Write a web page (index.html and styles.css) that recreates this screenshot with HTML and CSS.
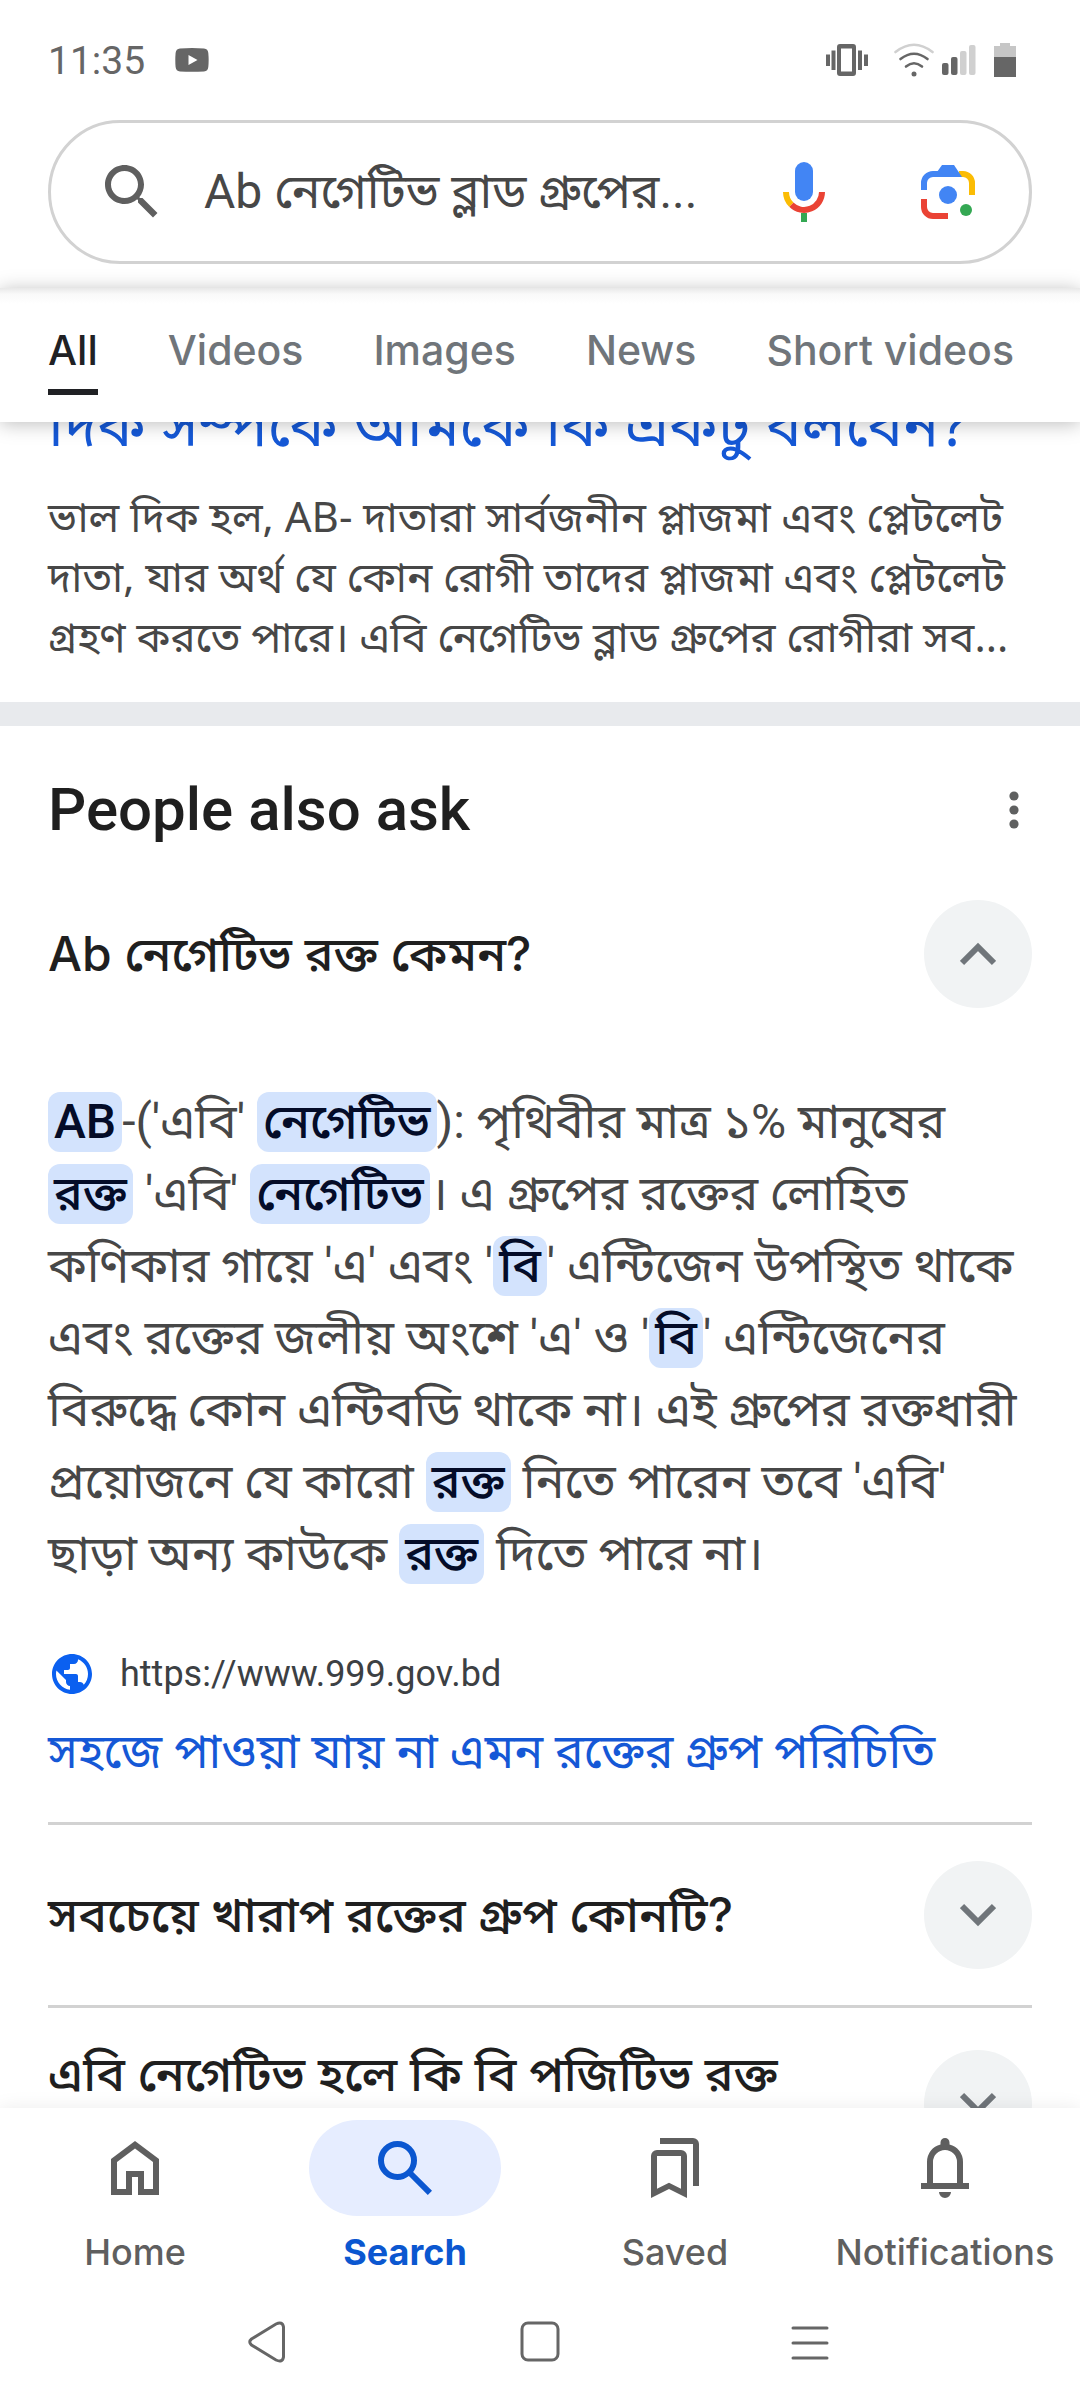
FILE: index.html
```html
<!DOCTYPE html>
<html lang="bn">
<head>
<meta charset="utf-8">
<meta name="viewport" content="width=device-width, initial-scale=1">
<title>Search</title>
<link rel="stylesheet" href="styles.css">
</head>
<body>
<div class="app">
  <header class="header">
    <div class="status">
      <span class="clock">11:35</span>
      <svg class="status-app" width="34" height="24" viewBox="0 0 34 24" aria-hidden="true"><path fill="#666" fill-rule="evenodd" d="M5 0.6Q17-.4 29 .6Q33 1 33.300 5Q34 12 33.300 19Q33 23 29 23.500Q17 24.200 5 23.500Q1 23 .6 19Q0 12 .6 5Q1 1 5 .6ZM13.500 7V17L22.500 12Z"/></svg>
      <div class="status-icons">
        <svg width="42" height="32" viewBox="0 0 42 32" fill="#666" aria-hidden="true"><path fill-rule="evenodd" d="M14 0H27Q30 0 30 3V29Q30 32 27 32H14Q11 32 11 29V3Q11 0 14 0ZM15 4.500V27.500H26V4.500Z"/><path d="M0 10.500H4V22H0ZM5.500 6.500H9.500V26H5.500ZM32 6.500H36V26H32ZM38 10.500H42V22H38Z"/></svg>
        <svg class="wifi" width="40" height="34" viewBox="0 0 40 34" fill="none" stroke="#666" stroke-width="2.600" stroke-linecap="round" aria-hidden="true"><path stroke="#d0d0d0" d="M1.500 9Q20-5.500 38.500 9"/><path d="M6.500 16Q20 5.500 33.500 16M12 23.500Q20 17 28 23.500"/><circle cx="20" cy="31" r="2.500" fill="#666" stroke="none"/></svg>
        <svg class="signal" width="34" height="32" viewBox="0 0 34 32" aria-hidden="true"><g fill="#666"><rect x="0" y="19" width="6.500" height="12" rx="2"/><rect x="9" y="13" width="6.500" height="18" rx="2"/></g><g fill="#d0d0d0"><rect x="18" y="7" width="6.500" height="24" rx="2"/><rect x="27" y="1" width="6.500" height="30" rx="2"/></g></svg>
        <svg width="22" height="34" viewBox="0 0 22 34" aria-hidden="true"><path fill="#c6c6c6" d="M6 0H16V3H22V14H0V3H6Z"/><path fill="#666" d="M0 14H22V34H0Z"/></svg>
      </div>
    </div>
    <form class="searchbox" role="search">
      <svg width="72" height="72" viewBox="0 0 24 24" fill="#5f5f5f" aria-hidden="true"><path d="M15.500 14h-.79l-.28-.27C15.410 12.590 16 11.110 16 9.500 16 5.910 13.090 3 9.500 3S3 5.910 3 9.500 5.910 16 9.500 16c1.610 0 3.090-.59 4.230-1.570l.27.28v.79l5 4.990L20.490 19l-4.990-5zm-6 0C7.010 14 5 11.990 5 9.500S7.010 5 9.500 5 14 7.010 14 9.500 11.990 14 9.500 14z"/></svg>
      <input class="query" type="text" aria-label="Search" value="Ab নেগেটিভ ব্লাড গ্রুপের...">
      <div class="search-tools">
        <button class="icon-btn" type="button" aria-label="Voice search">
          <svg width="42" height="60" viewBox="0 0 42 60" fill="none" aria-hidden="true"><rect x="12" y="0" width="18" height="39" rx="9" fill="#4285f4"/><path stroke="#ea4335" stroke-width="6" d="M8.300 42.700A18 18 0 0 0 39 30"/><path stroke="#fbbc04" stroke-width="6" d="M3 30A18 18 0 0 0 8.300 42.700"/><path fill="#34a853" d="M18 51H24V60H18Z"/></svg>
        </button>
        <button class="icon-btn" type="button" aria-label="Search with camera">
          <svg width="54" height="54" viewBox="0 0 54 54" fill="none" aria-hidden="true"><path stroke="#fbbc04" stroke-width="6" d="M38 9H42A9 9 0 0 1 51 18V30"/><path stroke="#4285f4" stroke-width="6" d="M3 25V18A9 9 0 0 1 12 9H36"/><path fill="#4285f4" d="M16 7L21 0H33L41 12H30Z"/><path stroke="#ea4335" stroke-width="6" d="M3 34V42A9 9 0 0 0 12 51H27"/><circle cx="27" cy="30" r="9" fill="#4285f4"/><circle cx="45" cy="45" r="6" fill="#34a853"/></svg>
        </button>
      </div>
    </form>
  </header>

  <nav class="tabs" aria-label="Result types">
    <a class="tab tab-active" href="#all">All</a>
    <a class="tab" href="#videos">Videos</a>
    <a class="tab" href="#images">Images</a>
    <a class="tab" href="#news">News</a>
    <a class="tab" href="#short">Short videos</a>
  </nav>

  <main class="results">
    <article class="result">
      <h3 class="result-title"><a href="#result">দিক সম্পর্কে আমকে কি একটু বলবেন?</a></h3>
      <p class="snippet">ভাল দিক হল, AB- দাতারা সার্বজনীন প্লাজমা এবং প্লেটলেট<br>দাতা, যার অর্থ যে কোন রোগী তাদের প্লাজমা এবং প্লেটলেট<br>গ্রহণ করতে পারে। এবি নেগেটিভ ব্লাড গ্রুপের রোগীরা সব...</p>
    </article>

    <section class="paa">
      <div class="paa-head">
        <h2>People also ask</h2>
        <button class="more" type="button" aria-label="More options">
          <svg width="10" height="38" viewBox="0 0 10 38" fill="#5f6060" aria-hidden="true"><circle cx="5" cy="5" r="4.600"/><circle cx="5" cy="19" r="4.600"/><circle cx="5" cy="33" r="4.600"/></svg>
        </button>
      </div>

      <div class="question question-open">
        <h3>Ab নেগেটিভ রক্ত কেমন?</h3>
        <button class="toggle" type="button" aria-label="Collapse" aria-expanded="true"><svg width="36" height="24" viewBox="0 0 36 24" aria-hidden="true"><path d="M2 21L18 5L34 21"/></svg></button>
      </div>
      <p class="answer"><mark>AB</mark>-('এবি' <mark>নেগেটিভ</mark>): পৃথিবীর মাত্র ১% মানুষের<br><mark>রক্ত</mark> 'এবি' <mark>নেগেটিভ</mark>। এ গ্রুপের রক্তের লোহিত<br>কণিকার গায়ে 'এ' এবং '<mark>বি</mark>' এন্টিজেন উপস্থিত থাকে<br>এবং রক্তের জলীয় অংশে 'এ' ও '<mark>বি</mark>' এন্টিজেনের<br>বিরুদ্ধে কোন এন্টিবডি থাকে না। এই গ্রুপের রক্তধারী<br>প্রয়োজনে যে কারো <mark>রক্ত</mark> নিতে পারেন তবে 'এবি'<br>ছাড়া অন্য কাউকে <mark>রক্ত</mark> দিতে পারে না।</p>
      <div class="source">
        <svg width="48" height="48" viewBox="0 0 24 24" fill="#0b60f0" aria-hidden="true"><path d="M12 2C6.480 2 2 6.480 2 12s4.480 10 10 10 10-4.480 10-10S17.520 2 12 2zm-1 17.930c-3.950-.49-7-3.850-7-7.930 0-.62.080-1.210.210-1.790L9 15v1c0 1.100.9 2 2 2v1.930zm6.900-2.540c-.26-.81-1-1.390-1.900-1.390h-1v-3c0-.55-.45-1-1-1H8v-2h2c.55 0 1-.45 1-1V7h2c1.100 0 2-.9 2-2v-.41c2.930 1.190 5 4.060 5 7.410 0 2.080-.8 3.970-2.100 5.390z"/></svg>
        <cite>https://www.999.gov.bd</cite>
      </div>
      <a class="source-link" href="#source">সহজে পাওয়া যায় না এমন রক্তের গ্রুপ পরিচিতি</a>

      <div class="question">
        <h3>সবচেয়ে খারাপ রক্তের গ্রুপ কোনটি?</h3>
        <button class="toggle" type="button" aria-label="Expand" aria-expanded="false"><svg width="36" height="24" viewBox="0 0 36 24" aria-hidden="true"><path d="M2 3L18 19L34 3"/></svg></button>
      </div>
      <div class="question question-tall">
        <h3>এবি নেগেটিভ হলে কি বি পজিটিভ রক্ত</h3>
        <button class="toggle" type="button" aria-label="Expand" aria-expanded="false"><svg width="36" height="24" viewBox="0 0 36 24" aria-hidden="true"><path d="M2 3L18 19L34 3"/></svg></button>
      </div>
    </section>
  </main>

  <footer class="footer">
    <nav class="bottom-nav" aria-label="Main">
      <a class="nav-item" href="#home"><span class="pill"><svg width="72" height="72" viewBox="0 0 24 24" aria-hidden="true"><path d="M6 19H9V13H15V19H18V10L12 5.500L6 10ZM4 21V9L12 3L20 9V21H13V15H11V21Z"/></svg></span>Home</a>
      <a class="nav-item nav-active" href="#search"><span class="pill"><svg width="72" height="72" viewBox="0 0 24 24" aria-hidden="true"><path d="M19.600 21l-6.300-6.300q-.75.6-1.725.95T9.500 16q-2.725 0-4.612-1.888T3 9.500t1.888-4.612T9.500 3t4.613 1.888T16 9.500q0 1.100-.35 2.075T14.700 13.300l6.300 6.300zM9.500 14q1.875 0 3.188-1.312T14 9.500t-1.312-3.187T9.500 5 6.313 6.313 5 9.500t1.313 3.188T9.500 14"/></svg></span>Search</a>
      <a class="nav-item" href="#saved"><span class="pill"><svg width="72" height="72" viewBox="0 0 24 24" aria-hidden="true"><path d="M4 22V8q0-.82.590-1.410T6 6h8q.82 0 1.410.59T16 8v14l-6-3zm2-3.050 4-2 4 2V8H6zM18 18V4H7V2h11q.82 0 1.410.59T20 4v14z"/></svg></span>Saved</a>
      <a class="nav-item" href="#notifications"><span class="pill"><svg width="72" height="72" viewBox="0 0 24 24" aria-hidden="true"><path d="M4 19V17H6V10Q6 7.900 7.250 6.290T10.500 4.200V3.500q0-.63.440-1.060T12 2t1.060.44.440 1.060v.7q2 .5 3.250 2.090T18 10v7h2v2zM8 17h8V10q0-1.650-1.170-2.830T12 6 9.170 7.170 8 10zM10 20h4q0 .82-.59 1.410T12 22t-1.410-.59T10 20"/></svg></span>Notifications</a>
    </nav>
    <div class="system-nav">
      <button type="button" aria-label="Back"><svg width="44" height="42" viewBox="0 0 44 42" aria-hidden="true"><path d="M3.500 18L28 3Q34.500 0 35.500 6V36Q34.500 42 28 39L3.500 24Q0 21 3.500 18Z"/></svg></button>
      <button type="button" aria-label="Home screen"><svg width="40" height="42" viewBox="0 0 40 42" aria-hidden="true"><rect x="2" y="2" width="36" height="37" rx="6"/></svg></button>
      <button type="button" aria-label="Recent apps"><svg width="38" height="42" viewBox="0 0 38 42" stroke-linecap="round" aria-hidden="true"><path d="M2 7H36M2 22H36M2 37H36"/></svg></button>
    </div>
  </footer>
</div>
</body>
</html>
```
FILE: styles.css
```css
* { box-sizing: border-box; }

body {
  margin: 0;
  background: #fff;
  color: #474747;
  font-family: Roboto, "Noto Sans Bengali", "Noto Sans", sans-serif;
}

h2, h3, p { margin: 0; font-weight: 500; }
a { color: inherit; text-decoration: none; }
svg { display: block; flex: none; }
button { padding: 0; border: 0; background: none; }

.app {
  display: flex;
  flex-direction: column;
  height: 100vh;
  overflow: hidden;
}

.header { padding: 0 48px 24px; }

.status {
  display: flex;
  align-items: center;
  height: 120px;
  color: #666;
}
.clock { padding-top: 2px; font: 400 39px/48px Roboto, sans-serif; }
.status-app { margin-left: 30px; }
.status-icons {
  display: flex;
  align-items: center;
  margin-left: auto;
  margin-right: 16px;
}
.wifi { margin-left: 26px; }
.signal { margin: 0 18px 0 8px; }

.searchbox {
  display: flex;
  align-items: center;
  height: 144px;
  padding: 0 54px 0 45px;
  border: 3px solid #d2d2d2;
  border-radius: 72px;
}
.query {
  flex: 1;
  min-width: 0;
  margin-left: 36px;
  padding: 0;
  border: 0;
  outline: 0;
  background: none;
  color: #474747;
  font: 400 48px/72px Roboto, "Noto Sans Bengali", sans-serif;
}
.search-tools {
  display: flex;
  align-items: center;
  gap: 96px;
  padding-left: 48px;
}
.icon-btn { display: flex; }

.tabs {
  position: relative;
  z-index: 1;
  display: flex;
  justify-content: space-between;
  height: 134px;
  padding: 36px 66px 0 48px;
  background: linear-gradient(#e8e8e8, #f9f9f9 6px, #fff 16px);
  box-shadow: 0 2px 18px rgba(0, 0, 0, 0.26);
}
.tab {
  height: 71px;
  color: #70757a;
  font: 500 41px/52px Inter, sans-serif;
}
.tab-active {
  border-bottom: 6px solid #202124;
  color: #202124;
}

.results {
  flex: 1;
  min-height: 0;
  overflow: hidden;
}

.result {
  margin-top: -33px;
  padding: 0 48px 31px;
  border-bottom: 24px solid #e8eaed;
  font-family: "Noto Sans Bengali", Roboto, sans-serif;
}
.result-title {
  color: #1558d6;
  font-size: 60px;
  font-weight: 400;
  line-height: 84px;
}
.snippet {
  padding-top: 18px;
  font-size: 42px;
  font-weight: 400;
  line-height: 60px;
  white-space: nowrap;
}

.paa { padding: 0 48px; color: #1f1f1f; }
.paa-head {
  display: flex;
  align-items: center;
  justify-content: space-between;
  padding-top: 48px;
}
.paa-head h2 { font: 500 60px/72px Roboto, sans-serif; }
.more { padding: 0 13px; }

.question {
  display: flex;
  align-items: center;
  justify-content: space-between;
  padding: 36px 0;
  border-top: 3px solid #d2d2d2;
}
.question-open { padding: 54px 0 0; border-top: 0; }
.question h3 {
  font: 500 48px/60px Inter, "Noto Sans Bengali", sans-serif;
}
.question-tall h3 { min-height: 120px; }
.toggle {
  display: grid;
  place-items: center;
  flex: none;
  width: 108px;
  height: 108px;
  border-radius: 50%;
  background: #f1f3f4;
}
.toggle path { fill: none; stroke: #70757a; stroke-width: 6; }

.answer {
  padding-top: 78px;
  color: #474747;
  font-size: 48px;
  font-weight: 400;
  line-height: 72px;
  white-space: nowrap;
}
mark {
  display: inline-block;
  height: 60px;
  padding: 0 6px;
  border-radius: 12px;
  background: #d3e3fd;
  color: #040c28;
  font-weight: 500;
  line-height: 60px;
}

.source {
  display: flex;
  align-items: center;
  gap: 24px;
  padding-top: 60px;
}
.source cite {
  color: #3c4043;
  font: 400 36px/48px Roboto, sans-serif;
}
.source-link {
  display: block;
  padding: 18px 0 34px;
  color: #1558d6;
  font-size: 48px;
  line-height: 72px;
}

.footer {
  position: relative;
  background: #fff;
  box-shadow: 0 0 18px rgba(0, 0, 0, 0.08);
}
.bottom-nav {
  display: grid;
  grid-template-columns: repeat(4, 1fr);
  padding-top: 12px;
}
.nav-item {
  display: flex;
  flex-direction: column;
  align-items: center;
  gap: 12px;
  color: #5f5f5f;
  font: 500 36px/48px Inter, sans-serif;
}
.nav-item svg { fill: currentColor; }
.pill {
  display: grid;
  place-items: center;
  width: 192px;
  height: 96px;
  border-radius: 48px;
}
.nav-active { color: #0b57d0; font-weight: 700; }
.nav-active .pill { background: #e6edff; }

.system-nav {
  display: grid;
  grid-template-columns: repeat(3, 1fr);
  width: 75%;
  height: 132px;
  margin: 0 auto;
}
.system-nav button { display: grid; place-items: center; }
.system-nav svg { fill: none; stroke: #666; stroke-width: 3; }
```
